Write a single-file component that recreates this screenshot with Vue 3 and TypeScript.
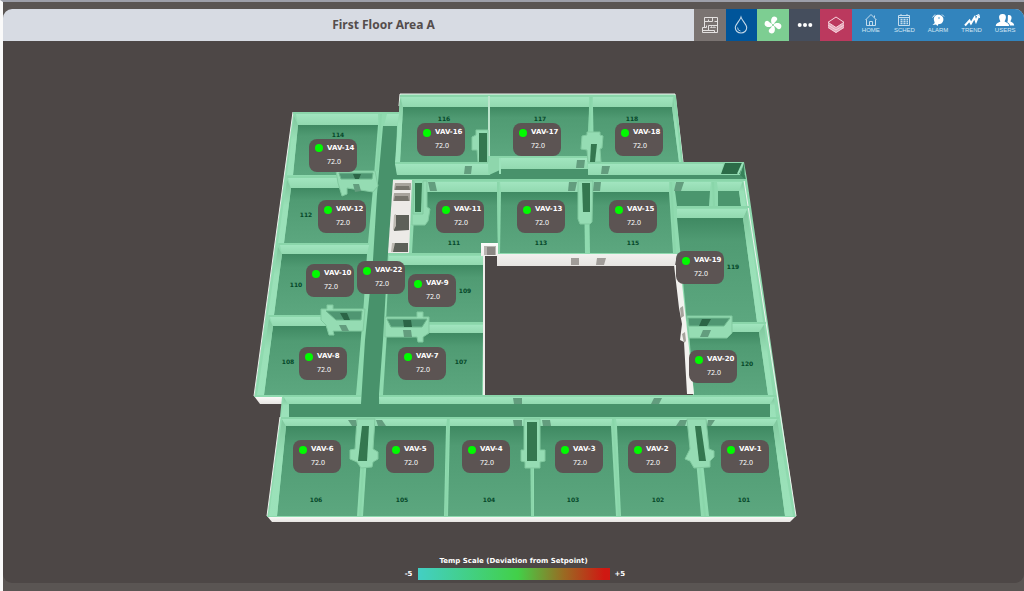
<script setup lang="ts">
interface Room {
  id: string
  floor: string
  label: [number, number]
}

interface Zone {
  name: string
  temp: string
  x: number
  y: number
}

const view = { x: 3, y: 41, width: 1021, height: 514 }
const viewBox = `${view.x} ${view.y} ${view.width} ${view.height}`

const rooms: Room[] = [
  { id: '116', floor: '403,107 488,107 488,162 400,162', label: [444, 121] },
  { id: '117', floor: '490,107 589,107 588,156 490,156', label: [540, 121] },
  { id: '118', floor: '593,107 672,107 679,162 594,162', label: [632, 121] },
  { id: '114', floor: '298,125 378,125 374,175 293,175', label: [338, 137] },
  { id: '112', floor: '291,188 373,188 368,243 284,243', label: [306, 217] },
  { id: '110', floor: '282,254 367,254 363,315 274,315', label: [296, 287] },
  { id: '108', floor: '273,326 362,326 356,395 264,395', label: [288, 364] },
  { id: '111', floor: '427,192 497,192 498,253 412,253 414,218 427,218', label: [454, 245] },
  { id: '113', floor: '501,192 584,192 585,253 500,253', label: [541, 245] },
  { id: '115', floor: '589,192 669,192 673,253 590,253', label: [633, 245] },
  { id: '109', floor: '389,265 483,265 483,322 386,322', label: [465, 293] },
  { id: '107', floor: '387,333 483,333 482,395 383,395', label: [461, 364] },
  { id: '119', floor: '677,218 743,218 757,322 687,322', label: [733, 269] },
  { id: '120', floor: '689,332 759,332 768,395 694,395', label: [747, 366] },
  { id: '106', floor: '286,426 363,426 357,516 277,516', label: [316, 502] },
  { id: '105', floor: '369,426 446,426 444,516 363,516', label: [402, 502] },
  { id: '104', floor: '450,426 530,426 531,516 448,516', label: [489, 502] },
  { id: '103', floor: '534,426 611,426 616,516 534,516', label: [573, 502] },
  { id: '102', floor: '617,426 693,426 701,516 621,516', label: [658, 502] },
  { id: '101', floor: '699,426 773,426 785,516 709,516', label: [744, 502] },
]

const closets = [
  '675,191 710,191 709,206 677,206',
  '718,191 739,191 741,206 718,206',
]

const corridors = [
  '383,126 397,126 396,162 397,175 745,175 746,179 393,179 392,252 388,253 383,340 379,394 379,404 770,404 770,417 289,417 289,404 361,404 365,340 373,260 377,194',
]

/* Wall surfaces that look toward the viewer */
const faces = [
  '401,97 488,97 488,107 403,107',
  '490,97 589,97 589,107 490,107',
  '593,97 673,97 672,107 593,107',
  '296,114 378,114 378,125 298,125',
  '387,114 399,114 397,126 384,126',
  '395,164 488,164 488,175 397,175',
  '490,158 587,158 587,169 490,169',
  '588,164 723,164 721,174 588,175',
  '288,178 374,178 373,188 291,188',
  '280,245 369,245 367,254 282,254',
  '270,317 364,317 362,326 273,326',
  '427,182 497,182 497,192 427,192',
  '500,182 579,182 579,192 501,192',
  '593,182 669,182 669,192 593,192',
  '675,182 711,182 710,191 675,191',
  '717,182 742,182 739,191 718,191',
  '677,209 747,209 743,218 677,218',
  '389,256 483,256 483,265 389,265',
  '427,325 483,325 483,333 427,333',
  '732,324 764,324 759,332 732,332',
  '284,397 361,397 361,404 288,404',
  '379,397 774,397 770,404 381,404',
  '282,419 359,419 357,426 286,426',
  '374,419 447,419 446,426 374,426',
  '450,419 526,419 526,426 450,426',
  '538,419 612,419 611,426 538,426',
  '616,419 690,419 692,426 617,426',
  '706,419 777,419 773,426 708,426',
]

/* Wall surfaces seen at a slant */
const sides = [
  '294,116 298,125 293,175 287,175',
  '287,180 291,188 284,243 278,243',
  '278,247 282,254 274,315 268,315',
  '269,319 273,326 264,395 257,395',
  '400,98 403,107 400,162 395,162',
  '673,98 672,107 679,162 682,162',
  '743,182 739,191 741,206 746,206',
  '747,210 743,218 757,322 763,322',
  '764,325 759,332 768,395 773,395',
  '282,419 286,426 277,516 269,516',
  '777,419 773,426 785,516 793,516',
  '284,398 289,404 289,417 281,417',
  '774,398 770,404 770,417 776,417',
]

/* Small service shafts built against the walls */
const shafts = [
  '476,130 488,130 488,162 478,162 477,150 472,150 472,137 476,135',
  '587,132 600,132 600,135 603,136 602,148 600,149 601,162 588,162 587,150 581,149 582,136 587,135',
  '423,181 427,181 427,207 430,209 428,221 425,225 412,225 412,181 414,181 413,214 423,214',
  '578,181 593,181 592,222 590,224 580,224 578,219',
  '336,171 375,171 378,186 373,192 347,188 347,194 342,196 338,183',
  '321,309 327,309 327,305 333,305 333,309 365,309 363,331 333,331 334,335 329,335 326,325 321,320',
  '385,317 417,317 417,312 423,312 423,317 429,317 429,333 423,337 423,342 418,342 417,337 385,337',
  '687,316 732,316 732,333 727,338 689,338',
  '357,419 375,419 373,449 378,452 378,459 373,462 372,467 361,468 357,462 350,459 350,450 355,449',
  '524,419 540,419 540,450 545,450 545,461 540,462 540,468 525,468 525,462 521,461 521,450 524,450',
  '687,419 706,419 709,449 714,451 714,457 710,461 710,467 694,468 690,461 685,459 690,449',
]

const shaftFloors = [
  '479,133 487,133 487,162 479,162',
  '591,144 597,144 595,162 590,162',
  '415,183 422,183 421,212 415,212',
  '582,183 590,183 590,212 583,212',
  '362,426 369,426 367,461 358,461',
  '527,422 537,422 537,461 527,461',
  '695,426 701,426 706,461 699,461',
]

/* Shafts that run along a wall, open at the top */
const troughs = [
  '339,173 373,173 372,179 341,179',
  '326,311 362,311 361,320 336,320',
  '387,319 427,319 422,327 391,327',
  '688,318 730,318 724,326 689,326',
]

const doors = [
  '465,166 472,166 471,174 464,174',
  '577,160 585,160 584,168 576,168',
  '602,166 610,166 608,174 601,174',
  '353,184 359,184 361,191 355,192',
  '339,325 346,325 349,331 342,331',
  '403,330 411,330 412,337 404,337',
  '703,330 711,330 708,337 700,337',
  '428,182 435,182 437,191 430,191',
  '569,182 577,182 575,191 568,191',
  '594,182 601,182 600,191 593,191',
  '676,182 684,182 681,191 674,191',
  '348,420 356,420 357,426 352,426',
  '376,420 382,420 386,426 378,426',
  '513,420 522,420 522,426 514,426',
  '542,420 550,420 551,426 543,426',
  '680,420 687,420 685,426 676,426',
  '708,420 715,420 711,426 707,426',
  '513,398 522,398 522,404 514,404',
  '654,398 662,398 659,404 651,404',
]

const darkDoors = [
  '353,174 361,174 359,179 355,179',
  '340,313 347,313 350,320 344,320',
  '403,320 411,320 412,327 404,327',
  '702,319 711,319 707,326 699,326',
]

const wallEdges = [
  '293,113 398,113',
  '400,96 675,96 682,162',
  '591,96 589,132',
  '381,113 377,171',
  '287,177 336,177',
  '279,244 369,244',
  '269,316 321,316',
  '395,163 488,163',
  '490,157 588,157',
  '588,163 724,163',
  '393,180 746,180',
  '498,182 499,253',
  '671,182 675,253',
  '713,182 714,206',
  '676,207 749,207',
  '388,254 484,254',
  '429,323 484,323',
  '732,323 766,323',
  '283,396 361,396',
  '379,396 776,396',
  '281,418 779,418',
  '448,418 446,516',
  '613,418 619,516',
  '363,468 360,516',
  '532,468 532,516',
  '700,468 705,516',
]

const zones: Zone[] = [
  { name: 'VAV-16', temp: '72.0', x: 417, y: 123 },
  { name: 'VAV-17', temp: '72.0', x: 513, y: 123 },
  { name: 'VAV-18', temp: '72.0', x: 615, y: 123 },
  { name: 'VAV-14', temp: '72.0', x: 309, y: 139 },
  { name: 'VAV-12', temp: '72.0', x: 318, y: 200 },
  { name: 'VAV-11', temp: '72.0', x: 436, y: 200 },
  { name: 'VAV-13', temp: '72.0', x: 517, y: 200 },
  { name: 'VAV-15', temp: '72.0', x: 609, y: 200 },
  { name: 'VAV-19', temp: '72.0', x: 676, y: 251 },
  { name: 'VAV-10', temp: '72.0', x: 306, y: 264 },
  { name: 'VAV-22', temp: '72.0', x: 357, y: 261 },
  { name: 'VAV-9', temp: '72.0', x: 408, y: 274 },
  { name: 'VAV-8', temp: '72.0', x: 299, y: 347 },
  { name: 'VAV-7', temp: '72.0', x: 398, y: 347 },
  { name: 'VAV-20', temp: '72.0', x: 689, y: 350 },
  { name: 'VAV-6', temp: '72.0', x: 293, y: 440 },
  { name: 'VAV-5', temp: '72.0', x: 386, y: 440 },
  { name: 'VAV-4', temp: '72.0', x: 462, y: 440 },
  { name: 'VAV-3', temp: '72.0', x: 555, y: 440 },
  { name: 'VAV-2', temp: '72.0', x: 628, y: 440 },
  { name: 'VAV-1', temp: '72.0', x: 721, y: 440 },
]

const place = (zone: Zone) => ({
  left: `${((zone.x - view.x) / view.width) * 100}%`,
  top: `${((zone.y - view.y) / view.height) * 100}%`,
})
</script>

<template>
  <div class="page">
    <div class="panel">
      <header class="bar">
        <h1 class="title">First Floor Area A</h1>
        <div class="tools">
          <button class="tool plan" type="button" aria-label="Floor plan">
            <svg viewBox="0 0 20 20" width="20" height="20" fill="none" stroke="#e4e1e0">
              <path d="M4.500 12.500V2.500H17.500V17.500H2.500V12.500H6.500V10.500M2.500 15.500H14.500V17.500" />
              <path d="M4.500 6.500H8.500V4.500M8.500 6.500H12.500V2.500M8.500 15V10.500H17M14.500 6.500H17.500" />
              <path d="M10 12.500H16M11.500 10V13M14 10V13" stroke-width=".8" opacity=".8" />
            </svg>
          </button>
          <button class="tool water" type="button" aria-label="Water">
            <svg viewBox="0 0 20 20" width="20" height="20" fill="none" stroke="#c3d8e8" stroke-width="1.100">
              <path d="M10 2.200C8.800 6 4.300 9 4.300 12.800a5.700 5.200 0 0 0 11.400 0C15.700 9 11.200 6 10 2.200Z" />
              <path d="M6.600 12.500a3.400 3.400 0 0 0 2.900 3.500" stroke-width=".9" />
            </svg>
          </button>
          <button class="tool fan" type="button" aria-label="Fans">
            <svg viewBox="0 0 20 20" width="20" height="20" fill="#fff">
              <g transform="rotate(20 10 10)">
                <path v-for="turn in [0, 90, 180, 270]" :key="turn" :transform="`rotate(${turn} 10 10)`" d="M10 10.600C7 8.600 5.600 5.300 6.700 3 7.800 1 11.300 1 12 3 12.600 5 10.300 6.200 10.700 9.500Z" />
              </g>
              <circle cx="10" cy="10" r="1" fill="#7dce92" />
            </svg>
          </button>
          <button class="tool more" type="button" aria-label="More">
            <svg viewBox="0 0 20 20" width="20" height="20" fill="#fff">
              <circle cx="4.700" cy="10" r="2" /><circle cx="10" cy="10" r="2" /><circle cx="15.300" cy="10" r="2" />
            </svg>
          </button>
          <button class="tool layers" type="button" aria-label="Layers">
            <svg viewBox="0 0 20 20" width="20" height="20" fill="none" stroke="#f6d5de">
              <path d="M2 7.500 10 12.500 18 7.500V12.500L10 18 2 12.500Z" fill="#e5a6b8" stroke="none" />
              <path d="M10 2 18 7.300 10 12.500 2 7.300Z" />
              <path d="M2 10 10 15 18 10M2 12.500 10 17.500 18 12.500" stroke-width=".9" />
            </svg>
          </button>
        </div>
        <nav class="menu" aria-label="Main">
          <a class="item" href="#home">
            <svg viewBox="0 0 20 14" width="20" height="14" fill="none" stroke="#c3dced">
              <path d="M4.500 7 10 1.500 15.500 7M5.500 6.500V12.500H14.500V6.500M8.500 12.500V8.500H11.500V12.500M13.500 4.500V2.500" />
            </svg>
            HOME
          </a>
          <a class="item" href="#sched">
            <svg viewBox="0 0 20 14" width="20" height="14" fill="none" stroke="#c3dced">
              <path d="M4.500 2.500H15.500V12.500H4.500ZM4.500 4.500H15.500M7 1V3M13 1V3" />
              <path d="M6.500 6.500H14M6.500 8.500H14M6.500 10.500H14" stroke-dasharray="2 1" stroke-width="1.500" />
            </svg>
            SCHED
          </a>
          <a class="item" href="#alarm">
            <svg viewBox="0 0 20 14" width="20" height="14" fill="#fff">
              <path d="M6.200 8C5 4.500 7 1.800 10.300 1.800S16 4.500 15.300 7.500C14.500 10.500 12.500 11 10.500 11L9.500 13 8 11.500 4.500 12 6.700 10Z" />
              <path d="M4.500 4.500 7 1.500M14 1.500 16 3.500" fill="none" stroke="#d9eaf5" />
              <circle cx="11" cy="5" r="1" fill="#8fbedd" />
            </svg>
            ALARM
          </a>
          <a class="item" href="#trend">
            <svg viewBox="0 0 20 14" width="20" height="14" fill="none" stroke="#fff" stroke-width="2">
              <path d="M3 12.500 7.500 7.500 9 10.500 12.500 4.500 14 8.500 16.500 2.500" />
              <path d="M13.500 3 17 1.500 17.500 5" stroke-width="1" />
            </svg>
            TREND
          </a>
          <a class="item" href="#users">
            <svg viewBox="0 0 20 14" width="20" height="14" fill="#fff">
              <path d="M13 2C15.300 1.500 17 3 16.500 5.500 16.200 7 15.600 7.500 15.500 8.500 17.500 9.500 19 10 19.200 12.500H15C14.500 10.500 13.500 10 12.300 9.300 13.300 7 12.500 4 13 2Z" />
              <path d="M7.500 1C10 .8 11.200 2.500 10.900 4.800 10.700 6.800 9.700 7.300 9.700 8.700 12 9.700 14 10 14.200 13H.8C1 10 3 9.700 5.300 8.700 5.300 7.300 4.300 6.800 4.100 4.800 3.800 2.500 5 1.200 7.500 1Z" />
            </svg>
            USERS
          </a>
        </nav>
      </header>

      <main class="stage">
        <svg class="floorplan" :viewBox="viewBox" role="img" aria-label="Floor plan of First Floor Area A">
          <defs>
            <linearGradient id="floor" x1="0" y1="0" x2="0" y2="1">
              <stop offset="0" stop-color="#3f8962" />
              <stop offset=".22" stop-color="#509b73" />
              <stop offset="1" stop-color="#5ca77f" />
            </linearGradient>
            <linearGradient id="face" x1="0" y1="0" x2="0" y2="1">
              <stop offset="0" stop-color="#a1e5bf" />
              <stop offset="1" stop-color="#92d9b0" />
            </linearGradient>
            <linearGradient id="side" x1="0" y1="0" x2="0" y2="1">
              <stop offset="0" stop-color="#7fc79d" />
              <stop offset=".4" stop-color="#99e0b7" />
              <stop offset="1" stop-color="#9be2ba" />
            </linearGradient>
            <linearGradient id="white-wall" x1="0" y1="0" x2="0" y2="1">
              <stop offset="0" stop-color="#fdfcfb" />
              <stop offset="1" stop-color="#e6e4e1" />
            </linearGradient>
          </defs>

          <polygon points="267,516 272,522 790,522 796,516" fill="url(#white-wall)" />
          <polygon points="254,396 260,404 283,404 284,396" fill="url(#white-wall)" />
          <path
            d="M293 112H399L400 94H675L683 162H744L747 179 796 517H267L280 417 282 397H254ZM484 254V395H693L676 254Z"
            fill="#8fdaaf"
            fill-rule="evenodd"
          />
          <path d="M254 396 293 112M399 106 400 94H675L683 162M744 180 796 516M267 516 280 417" fill="none" stroke="#edf3ee" />

          <polygon v-for="points in corridors" :key="points" :points="points" fill="#48926b" />
          <polygon v-for="points in closets" :key="points" :points="points" fill="#4b966e" />
          <polygon v-for="room in rooms" :key="room.id" :points="room.floor" fill="url(#floor)" />
          <polygon v-for="points in sides" :key="points" :points="points" fill="url(#side)" />
          <polygon v-for="points in faces" :key="points" :points="points" fill="url(#face)" />
          <polyline v-for="points in wallEdges" :key="points" :points="points" class="edge" />
          <path d="M490 169H588V175H490Z" fill="#48926b" />
          <path d="M489 96V156" fill="none" stroke="#e6efe8" />
          <path d="M490 158H500V170L489 175Z" fill="#8ed6ac" />
          <path d="M500 158V174" fill="none" stroke="#9be2ba" stroke-width="2" />

          <polygon v-for="points in shafts" :key="points" :points="points" class="shaft" />
          <polygon v-for="points in shaftFloors" :key="points" :points="points" fill="#34774f" />
          <polygon v-for="points in troughs" :key="points" :points="points" class="trough" />
          <polygon v-for="points in doors" :key="points" :points="points" class="door" />
          <polygon v-for="points in darkDoors" :key="points" :points="points" fill="#2b6546" />

          <path d="M725 163H743L740 174H721Z" fill="#2c6c48" />
          <path d="M743 163 738 174" fill="none" stroke="#9be2ba" stroke-width="2" />
          <path d="M740 175 744 163 745 179Z" fill="#38825a" />

          <g class="stairs">
            <path d="M393 180H412L409 253H388Z" fill="#eceae7" />
            <path d="M395 183H411V190H394ZM394 193H410V201H393Z" fill="#a8a49d" />
            <path d="M396 186H409L410 190H395ZM395 196H408L409 201H394Z" fill="#77756d" />
            <path d="M395 215H409V230L394 231ZM393 243H408V252H392Z" fill="#5d6059" />
            <path d="M394 215 396 214V226L393 231ZM392 243 395 243 393 252H391Z" fill="#bdb9b2" />
          </g>

          <path d="M481 243H498V254H677L675 266H497V256H481Z" fill="url(#white-wall)" />
          <path d="M484 246H496V255H484Z" fill="#b7b4b0" />
          <path d="M487 247H495V255H487Z" fill="#8b8884" />
          <path d="M571 258H579V265H571ZM597 258H606L604 265H596Z" fill="#a19d99" />
          <path d="M674 265H680L694 394H687L684 342 680 340 682 324 679 308Z" fill="#f3f2ef" />
          <path d="M680 308 683 306 684 316 681 318ZM682 334 685 332 686 341 684 343Z" fill="#a5a39c" />
          <path d="M484 256V395" fill="none" stroke="#eeeeeb" stroke-width="2" />

          <text v-for="room in rooms" :key="room.id" :x="room.label[0]" :y="room.label[1]" class="room">{{ room.id }}</text>
        </svg>

        <div v-for="zone in zones" :key="zone.name" class="zone" :style="place(zone)">
          <span class="lamp"></span>
          <strong class="name">{{ zone.name }}</strong>
          <span class="temp">{{ zone.temp }}</span>
        </div>
      </main>

      <footer class="legend">
        <div class="caption">Temp Scale (Deviation from Setpoint)</div>
        <div class="scale">
          <span class="end low">-5</span>
          <div class="ramp"></div>
          <span class="end">+5</span>
        </div>
      </footer>
    </div>
  </div>
</template>

<style>
body {
  margin: 0;
  background: #5a5553;
}
</style>

<style scoped>
.page {
  box-sizing: border-box;
  min-height: 100vh;
  padding: 7px 0 8px;
  border-top: 2px solid #9d9fa9;
  border-left: 3px solid #fafafa;
  background: #5a5553;
  font-family: "Noto Sans", "Open Sans", sans-serif;
}

.panel {
  overflow: hidden;
  border-radius: 9px;
  background: #4d4746;
}

.bar {
  display: flex;
  height: 32px;
  background: #d7dbe3;
}

.title {
  flex: 1;
  margin: 0;
  padding-left: 70px;
  color: #544d4c;
  font: bold 12px/32px "Noto Sans", sans-serif;
  text-align: center;
}

.tools {
  display: flex;
  width: 158px;
}

.tool {
  display: flex;
  flex: 1;
  align-items: center;
  justify-content: center;
  padding: 0;
  border: 0;
}

.plan { background: #7a7371; }
.water { background: #00559a; }
.fan { background: #7dce92; }
.more { background: #454e5d; }
.layers { background: #bb395e; }

.menu {
  display: flex;
  box-sizing: border-box;
  width: 172px;
  padding: 0 2px;
  background: #3284bd;
}

.item {
  display: flex;
  flex: 1;
  flex-direction: column;
  align-items: center;
  padding-top: 4px;
  color: #d3e6f3;
  font: 6px/7px "Liberation Sans", Arial, sans-serif;
  text-decoration: none;
}

.stage {
  position: relative;
}

.floorplan {
  display: block;
  width: 100%;
}

.edge {
  fill: none;
  stroke: #8ad6aa;
  stroke-width: 2;
}

.shaft {
  fill: #95dcb3;
  stroke: #81c99f;
}

.trough {
  fill: #4f9672;
  stroke: #6fb88e;
}

.door {
  fill: #639d7e;
}

.room {
  fill: #06482a;
  font: bold 6px "DejaVu Sans", Verdana, sans-serif;
  text-anchor: middle;
}

.zone {
  position: absolute;
  display: grid;
  grid-template-columns: 8px auto;
  grid-template-rows: 13px 13px;
  column-gap: 4px;
  align-items: center;
  box-sizing: border-box;
  width: 48px;
  padding: 3px 0 4px 6px;
  border-radius: 8px;
  background: #5c5453;
  color: #fff;
  font-size: 7px;
  line-height: 13px;
}

.lamp {
  width: 8px;
  height: 8px;
  border-radius: 50%;
  background: #00fb00;
}

.name {
  font-family: "DejaVu Sans", Verdana, sans-serif;
}

.temp {
  grid-column: 2;
}

.legend {
  display: flex;
  flex-direction: column;
  align-items: center;
  height: 28px;
  color: #fff;
  font: bold 7px "DejaVu Sans", Verdana, sans-serif;
}

.caption {
  height: 13px;
  line-height: 13px;
}

.scale {
  display: grid;
  grid-template-columns: 16px 192px 16px;
  column-gap: 5px;
  align-items: center;
  line-height: 12px;
}

.low {
  text-align: right;
}

.ramp {
  height: 12px;
  background: linear-gradient(90deg, #43cfc4, #42d048 52%, #9a6a22 76%, #d01812 97%);
}
</style>
